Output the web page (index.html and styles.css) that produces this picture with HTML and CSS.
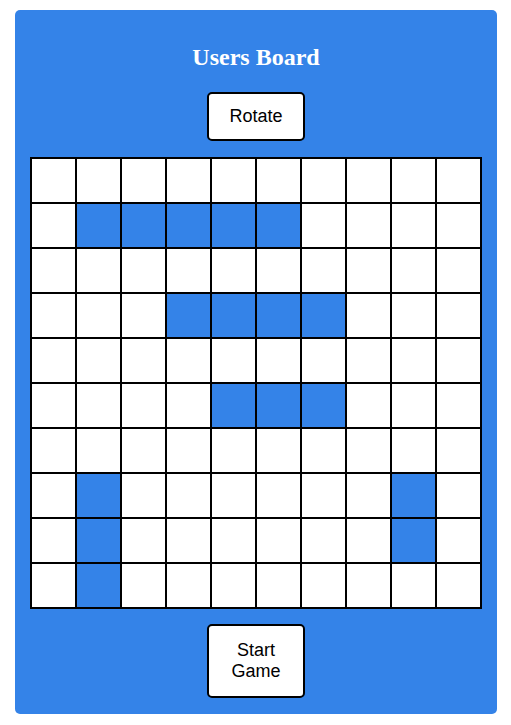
FILE: index.html
```html
<!DOCTYPE html>
<html lang="en">
<head>
<meta charset="utf-8">
<title>Users Board</title>
<link rel="stylesheet" href="styles.css">
</head>
<body>
<div class="panel">
  <h1 class="title">Users Board</h1>
  <button class="btn btn-rotate">Rotate</button>
  <div class="board">
    <div class="cell"></div><div class="cell"></div><div class="cell"></div><div class="cell"></div><div class="cell"></div><div class="cell"></div><div class="cell"></div><div class="cell"></div><div class="cell"></div><div class="cell"></div>
    <div class="cell"></div><div class="cell ship"></div><div class="cell ship"></div><div class="cell ship"></div><div class="cell ship"></div><div class="cell ship"></div><div class="cell"></div><div class="cell"></div><div class="cell"></div><div class="cell"></div>
    <div class="cell"></div><div class="cell"></div><div class="cell"></div><div class="cell"></div><div class="cell"></div><div class="cell"></div><div class="cell"></div><div class="cell"></div><div class="cell"></div><div class="cell"></div>
    <div class="cell"></div><div class="cell"></div><div class="cell"></div><div class="cell ship"></div><div class="cell ship"></div><div class="cell ship"></div><div class="cell ship"></div><div class="cell"></div><div class="cell"></div><div class="cell"></div>
    <div class="cell"></div><div class="cell"></div><div class="cell"></div><div class="cell"></div><div class="cell"></div><div class="cell"></div><div class="cell"></div><div class="cell"></div><div class="cell"></div><div class="cell"></div>
    <div class="cell"></div><div class="cell"></div><div class="cell"></div><div class="cell"></div><div class="cell ship"></div><div class="cell ship"></div><div class="cell ship"></div><div class="cell"></div><div class="cell"></div><div class="cell"></div>
    <div class="cell"></div><div class="cell"></div><div class="cell"></div><div class="cell"></div><div class="cell"></div><div class="cell"></div><div class="cell"></div><div class="cell"></div><div class="cell"></div><div class="cell"></div>
    <div class="cell"></div><div class="cell ship"></div><div class="cell"></div><div class="cell"></div><div class="cell"></div><div class="cell"></div><div class="cell"></div><div class="cell"></div><div class="cell ship"></div><div class="cell"></div>
    <div class="cell"></div><div class="cell ship"></div><div class="cell"></div><div class="cell"></div><div class="cell"></div><div class="cell"></div><div class="cell"></div><div class="cell"></div><div class="cell ship"></div><div class="cell"></div>
    <div class="cell"></div><div class="cell ship"></div><div class="cell"></div><div class="cell"></div><div class="cell"></div><div class="cell"></div><div class="cell"></div><div class="cell"></div><div class="cell"></div><div class="cell"></div>
  </div>
  <button class="btn btn-start">Start Game</button>
</div>
</body>
</html>
```

FILE: styles.css
```css
html, body {
  margin: 0;
  padding: 0;
  background: #ffffff;
}

.panel {
  box-sizing: border-box;
  width: 482px;
  margin: 10px 0 0 15px;
  padding: 33px 15px 16px;
  background: #3483e8;
  border-radius: 5px;
  display: flex;
  flex-direction: column;
  align-items: center;
}

.title {
  margin: 0;
  font-family: "Liberation Serif", "Times New Roman", serif;
  font-size: 24px;
  font-weight: bold;
  line-height: 28px;
  color: #ffffff;
}

.btn {
  box-sizing: border-box;
  width: 98px;
  padding: 0 8px;
  background: #ffffff;
  color: #000000;
  border: 2px solid #000000;
  border-radius: 5px;
  font-family: "Liberation Sans", Arial, sans-serif;
  font-size: 18px;
  line-height: 21px;
  text-align: center;
}

.btn-rotate {
  margin-top: 21px;
  height: 49px;
}

.btn-start {
  margin-top: 15px;
  height: 74px;
}

.board {
  margin-top: 16px;
  display: grid;
  grid-template-columns: repeat(10, 43px);
  grid-auto-rows: 43px;
  gap: 2px;
  padding: 2px;
  background: #000000;
}

.cell {
  background: #ffffff;
}

.cell.ship {
  background: #3483e8;
}
```
